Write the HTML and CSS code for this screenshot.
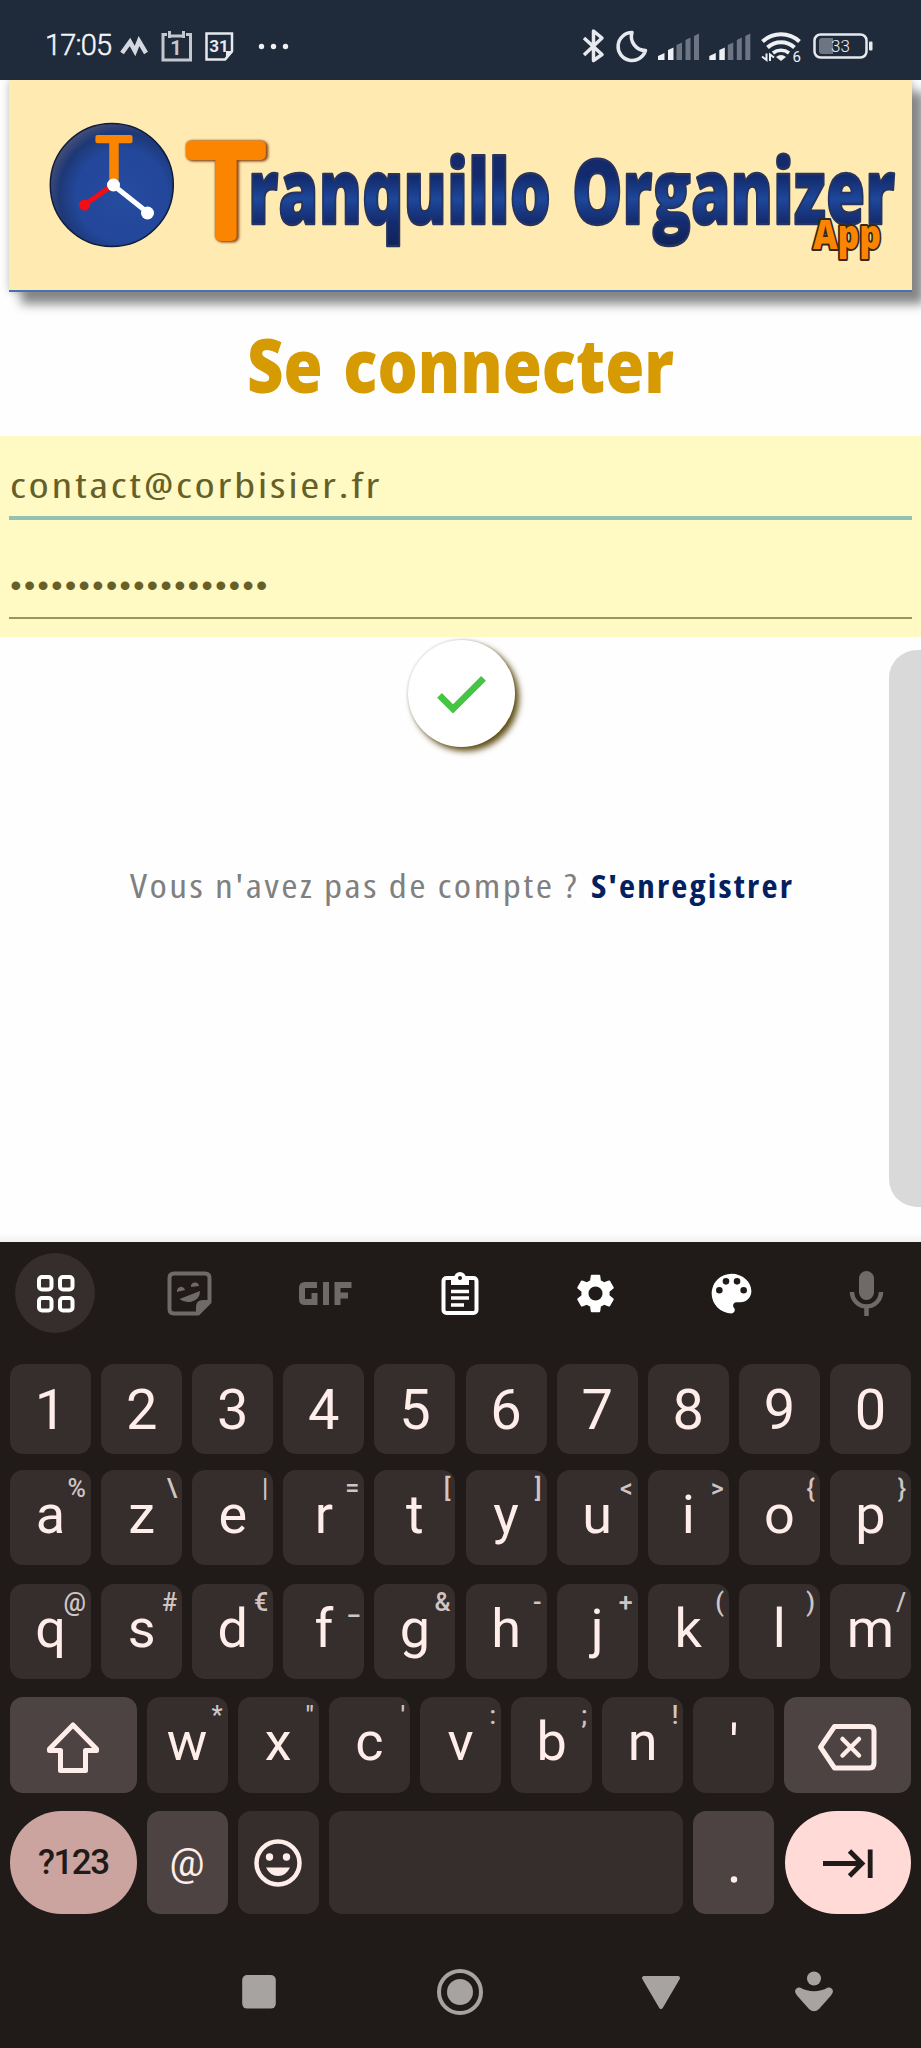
FILE: index.html
```html
<!DOCTYPE html>
<html lang="fr">
<head>
<meta charset="utf-8">
<title>Tranquillo Organizer</title>
<link rel="stylesheet" href="styles.css">
</head>
<body>
<div class="phone">
  <header class="status">
    <svg width="250" height="40" viewBox="40 26 250 40">
      <text class="clock" x="45" y="54.5" textLength="67" lengthAdjust="spacing">17:05</text>
      <path d="M122 53L130 42L135 51L139 41L146 53" fill="none" stroke="#d5d8de" stroke-width="4.5"/>
      <g fill="none" stroke="#c3c7cf" stroke-width="3"><path d="M167 34.5H163V60H190.500V34.500H186M171 36H182"/><path d="M169.500 31V38M183.500 31V38"/></g>
      <text class="cal" x="176" y="54.500" font-size="20" text-anchor="middle" fill="#c3c7cf">1</text>
      <path d="M206.500 33.500H232V51L225 59.500H206.500Z" fill="none" stroke="#e6e9ee" stroke-width="2.500"/>
      <path d="M233 51V52L226 60V51Z" fill="#e6e9ee"/>
      <text class="cal" x="219" y="51.500" font-size="17" text-anchor="middle" fill="#e6e9ee">31</text>
      <g fill="#eef0f4"><circle cx="261.500" cy="46.500" r="2.700"/><circle cx="273.500" cy="46.500" r="2.700"/><circle cx="285.500" cy="46.500" r="2.700"/></g>
    </svg>
    <svg width="300" height="40" viewBox="578 26 300 40">
      <path d="M584 38L602 54.500L593.500 60.500V31L602 38L584 55" fill="none" stroke="#e6e9ee" stroke-width="3.500" stroke-linejoin="round"/>
      <path d="M632 32.500A14 14 0 1 0 645.500 50.500A14 14 0 0 1 632 32.500Z" fill="none" stroke="#e6e9ee" stroke-width="3.500" stroke-linejoin="round"/>
      <g id="signal"><path d="M658 60V56L664.500 53V60ZM668 60V50L673.500 47.500V60Z" fill="#eef0f4"/><path d="M676.500 60V45L682 42.500V60ZM685.500 60V40L690.500 37.500V60ZM694 60V36L699 33.500V60Z" fill="#6d7582"/></g>
      <use href="#signal" x="51.300"/>
      <g fill="none" stroke="#eef0f4" stroke-width="4"><path d="M762.500 41.500A27 27 0 0 1 799.500 41.500"/><path d="M767.500 47.500A20 20 0 0 1 794.500 47.500"/><path d="M773 53A13 13 0 0 1 789 53" stroke-width="3.500"/></g>
      <path d="M776 57Q781 53 786 57L781 61Z" fill="#eef0f4"/>
      <path d="M766.500 53.500V60L762 56.500M770 61V54.500L774 57.500" fill="none" stroke="#eef0f4" stroke-width="2"/>
      <text x="792.500" y="61.500" font-size="15" fill="#eef0f4">6</text>
      <rect x="814.500" y="34.500" width="52" height="23" rx="6" fill="none" stroke="#e6e9ee" stroke-width="2.500"/>
      <path d="M822 38H833V54H822Q819 54 819 51V41Q819 38 822 38Z" fill="#6d7582"/>
      <rect x="869" y="41.500" width="3.500" height="9" rx="1" fill="#e6e9ee"/>
      <text class="pct" x="831" y="52" textLength="19" lengthAdjust="spacing">33</text>
    </svg>
  </header>

  <main class="page">
    <div class="banner">
      <svg width="903" height="210" viewBox="9 80 903 210">
        <defs>
          <radialGradient id="disc" cx=".58" cy=".58" r=".62"><stop offset="0" stop-color="#254b9f"/><stop offset=".6" stop-color="#23479a"/><stop offset=".82" stop-color="#1d3876"/><stop offset="1" stop-color="#4a5077"/></radialGradient>
          <linearGradient id="ink" x1="0" y1="155" x2="0" y2="243" gradientUnits="userSpaceOnUse"><stop offset="0" stop-color="#16296a"/><stop offset=".25" stop-color="#122b6e"/><stop offset=".5" stop-color="#1e479a"/><stop offset=".75" stop-color="#142c70"/><stop offset="1" stop-color="#10245c"/></linearGradient>
        </defs>
        <circle cx="111.800" cy="185" r="61.500" fill="url(#disc)" stroke="#0d1c3d" stroke-width="1.500"/>
        <text class="initial small" x="97" y="179" textLength="34" lengthAdjust="spacingAndGlyphs">T</text>
        <path d="M113 185L84 205" stroke="#f20d17" stroke-width="5"/><circle cx="84.500" cy="205" r="5.500" fill="#f20d17"/>
        <path d="M113 185L147 212" stroke="#fff" stroke-width="5"/><circle cx="113.500" cy="185" r="6.500" fill="#fff"/><circle cx="147.500" cy="213" r="6.500" fill="#fff"/>
        <text class="initial" x="190" y="236" textLength="72" lengthAdjust="spacingAndGlyphs">T</text>
        <g fill="url(#ink)" stroke="#26345e" stroke-width="2.500" stroke-linejoin="round" font-size="91">
          <text class="heavy" x="248" y="223.500" textLength="303" lengthAdjust="spacingAndGlyphs">ranquillo</text>
          <text class="heavy" x="572" y="223.500" textLength="323" lengthAdjust="spacingAndGlyphs">Organizer</text>
        </g>
        <text class="heavy app" x="813" y="249" font-size="40" textLength="68" lengthAdjust="spacingAndGlyphs">App</text>
      </svg>
    </div>

    <h1 class="title"><svg width="440" height="110" viewBox="240 310 440 110"><text class="heavy" x="246" y="393" font-size="75" word-spacing="5" textLength="427" lengthAdjust="spacingAndGlyphs" fill="#d69b03">Se connecter</text></svg></h1>

    <form class="fields">
      <div class="field active"><svg width="500" height="70" viewBox="9 446 500 70"><text class="hand" x="10" y="498" font-size="35" textLength="372" lengthAdjust="spacingAndGlyphs">contact@corbisier.fr</text></svg></div>
      <div class="field"><svg width="500" height="70" viewBox="9 547 500 70"><text class="dots" x="10.300" y="596" textLength="257" lengthAdjust="spacing">•••••••••••••••••••</text></svg></div>
    </form>

    <div class="submit"><svg width="64" height="64" viewBox="0 0 24 24"><path fill="#46c444" stroke="#46c444" stroke-width=".5" d="M9 16.170L4.830 12l-1.420 1.410L9 19 21 7l-1.410-1.410z"/></svg></div>

    <p class="signup"><svg width="680" height="50" viewBox="120 860 680 50">
      <text class="hand" x="129" y="898" font-size="32" textLength="449" fill="#808080" lengthAdjust="spacingAndGlyphs">Vous n'avez pas de compte ?</text>
      <text class="hand bold" x="590" y="898" font-size="32" textLength="203" lengthAdjust="spacingAndGlyphs">S'enregistrer</text>
    </svg></p>
    <div class="side-handle"></div>
  </main>

  <section class="keyboard">
    <div class="tools">
      <div class="tool round"><svg width="80" height="80" viewBox="14 1253 80 80" fill="none" stroke="#fff" stroke-width="4"><rect x="38" y="1277" width="12.500" height="12.500" rx="3"/><rect x="59" y="1277" width="12.500" height="12.500" rx="3"/><rect x="38" y="1298" width="12.500" height="12.500" rx="3"/><rect x="59" y="1298" width="12.500" height="12.500" rx="3"/></svg></div>
      <div class="tool"><svg width="80" height="80" viewBox="151 1253 80 80"><path d="M175 1273.500H206Q210.500 1273.500 210.500 1278V1302L199 1313.500H175Q170.500 1313.500 170.500 1309V1278Q170.500 1273.500 175 1273.500Z" fill="none" stroke="#6f6968" stroke-width="4"/><path d="M212 1300V1303L200 1315H197V1307Q197 1300 204 1300ZM180.500 1299L201 1291Q201 1299 193 1301.500Q186 1303.500 180.500 1299ZM178 1292A4 4 0 0 1 186 1290ZM192 1287A4 4 0 0 1 200 1286Z" fill="#6f6968"/></svg></div>
      <div class="tool"><svg width="80" height="80" viewBox="285 1253 80 80" fill="none" stroke="#6f6968" stroke-width="6"><path d="M317 1285H305Q302 1285 302 1288V1299Q302 1302 305 1302H314.500V1293M326 1282V1305M337.500 1305V1285H351.500M337.500 1295.500H348"/></svg></div>
      <div class="tool"><svg width="80" height="80" viewBox="420 1253 80 80"><rect x="443.500" y="1278" width="33" height="35" rx="3" fill="none" stroke="#fff" stroke-width="4"/><path d="M451 1278H454A6 6 0 0 1 466 1278H469V1285H451Z" fill="#fff"/><circle cx="460" cy="1278" r="2" fill="#201a19"/><path d="M451 1291.500H469M451 1298H469M451 1305H464" stroke="#fff" stroke-width="3.500"/></svg></div>
      <div class="tool"><svg width="47" height="47" viewBox="0 0 24 24"><path fill="#fff" fill-rule="evenodd" d="M19.140 12.940c.040-.300.060-.610.060-.940s-.020-.640-.070-.940l2.030-1.580c.180-.140.230-.410.120-.610l-1.920-3.320c-.120-.220-.370-.290-.590-.220l-2.390.960c-.500-.380-1.030-.700-1.620-.940l-.360-2.540c-.040-.240-.240-.410-.480-.410h-3.840c-.240 0-.430.170-.470.410l-.360 2.540c-.590.240-1.130.570-1.620.940l-2.390-.960c-.220-.080-.470 0-.590.220L2.740 8.870c-.120.210-.080.470.120.610l2.030 1.580c-.050.300-.090.630-.090.940s.020.640.070.940l-2.030 1.580c-.180.140-.230.410-.120.610l1.920 3.320c.120.220.370.290.590.220l2.390-.960c.500.380 1.030.700 1.620.940l.360 2.540c.050.240.240.410.480.410h3.840c.240 0 .440-.170.470-.410l.360-2.540c.590-.240 1.130-.560 1.620-.940l2.390.960c.220.080.470 0 .590-.220l1.920-3.320c.120-.220.070-.470-.120-.610zM12 15.600a3.600 3.600 0 1 1 0-7.200 3.600 3.600 0 0 1 0 7.200z"/></svg></div>
      <div class="tool"><svg width="53" height="53" viewBox="0 0 24 24"><path fill="#fff" d="M12 3a9 9 0 0 0 0 18c.830 0 1.500-.670 1.500-1.500 0-.390-.150-.740-.390-1.010-.230-.260-.380-.610-.380-.990 0-.830.670-1.500 1.500-1.500H16c2.760 0 5-2.240 5-5 0-4.420-4.030-8-9-8zm-5.500 9a1.500 1.500 0 1 1 0-3 1.500 1.500 0 0 1 0 3zm3-4a1.500 1.500 0 1 1 0-3 1.500 1.500 0 0 1 0 3zm5 0a1.500 1.500 0 1 1 0-3 1.500 1.500 0 0 1 0 3zm3 4a1.500 1.500 0 1 1 0-3 1.500 1.500 0 0 1 0 3z"/></svg></div>
      <div class="tool"><svg width="80" height="80" viewBox="826 1253 80 80"><rect x="859" y="1271" width="15" height="29" rx="7.500" fill="#6f6968"/><path d="M852 1292A14.500 14.500 0 0 0 881 1292M866.500 1306V1316" fill="none" stroke="#6f6968" stroke-width="4.500"/></svg></div>
    </div>

    <div class="row ten digits">
      <div class="key">1</div><div class="key">2</div><div class="key">3</div><div class="key">4</div><div class="key">5</div><div class="key">6</div><div class="key">7</div><div class="key">8</div><div class="key">9</div><div class="key">0</div>
    </div>
    <div class="row ten">
      <div class="key">a<span class="alt">%</span></div><div class="key">z<span class="alt">\</span></div><div class="key">e<span class="alt">|</span></div><div class="key">r<span class="alt">=</span></div><div class="key">t<span class="alt">[</span></div><div class="key">y<span class="alt">]</span></div><div class="key">u<span class="alt">&lt;</span></div><div class="key">i<span class="alt">&gt;</span></div><div class="key">o<span class="alt">{</span></div><div class="key">p<span class="alt">}</span></div>
    </div>
    <div class="row ten third">
      <div class="key">q<span class="alt">@</span></div><div class="key">s<span class="alt">#</span></div><div class="key">d<span class="alt">€</span></div><div class="key">f<span class="alt low">_</span></div><div class="key">g<span class="alt">&amp;</span></div><div class="key">h<span class="alt">-</span></div><div class="key">j<span class="alt">+</span></div><div class="key">k<span class="alt">(</span></div><div class="key">l<span class="alt">)</span></div><div class="key">m<span class="alt">/</span></div>
    </div>
    <div class="row mixed">
      <div class="key special icon"><svg width="60" height="60" viewBox="43 1712 60 60"><path d="M73 1722L96.500 1746V1747.500H85.500V1767.500H60.500V1747.500H49.500V1746Z" fill="none" stroke="#ffedea" stroke-width="5" stroke-linejoin="round"/></svg></div>
      <div class="key">w<span class="alt">*</span></div><div class="key">x<span class="alt">"</span></div><div class="key">c<span class="alt">'</span></div><div class="key">v<span class="alt">:</span></div><div class="key">b<span class="alt">;</span></div><div class="key">n<span class="alt">!</span></div><div class="key quote">'</div>
      <div class="key special icon"><svg width="70" height="60" viewBox="812.500 1715 70 60"><path d="M834 1726.500H869Q873.500 1726.500 873.500 1731V1763Q873.500 1768 869 1768H834L820 1747.200Z" fill="none" stroke="#ffedea" stroke-width="5" stroke-linejoin="round"/><path d="M842 1739L858.500 1755.500M858.500 1739L842 1755.500" stroke="#ffedea" stroke-width="4.500" stroke-linecap="round"/></svg></div>
    </div>
    <div class="row mixed last">
      <div class="key symbols">?123</div>
      <div class="key special at">@</div>
      <div class="key icon"><svg width="50" height="50" viewBox="-25 -25 50 50"><circle r="21.500" fill="none" stroke="#ffedea" stroke-width="4.500"/><circle cx="-8.500" cy="-6" r="3.700" fill="#ffedea"/><circle cx="8.500" cy="-6" r="3.700" fill="#ffedea"/><path d="M-12 4.500H12Q8 13 0 13T-12 4.500Z" fill="#ffedea"/></svg></div>
      <div class="key space"></div>
      <div class="key special icon"><svg width="20" height="60" viewBox="-10 -30 20 60"><circle cy="16.500" r="3.200" fill="#ffedea"/></svg></div>
      <div class="key enter icon"><svg width="60" height="40" viewBox="817 1842 60 40" fill="none" stroke="#201a19" stroke-width="4.800"><path d="M822 1862.500H861M848.500 1850L861 1862.500L848.500 1875M869.200 1848.500V1877"/></svg></div>
    </div>

    <nav class="nav">
      <svg width="48" height="48" viewBox="-24 -24 48 48"><rect x="-16.800" y="-17" width="33.600" height="33.600" rx="5" fill="#a6a3a1"/></svg>
      <svg width="48" height="48" viewBox="-24 -24 48 48"><circle r="21" fill="none" stroke="#a6a3a1" stroke-width="4"/><circle r="13" fill="#a6a3a1"/></svg>
      <svg width="48" height="48" viewBox="-24 -24 48 48"><path d="M-17 -14H17L0 15Z" fill="#a6a3a1" stroke="#a6a3a1" stroke-width="4" stroke-linejoin="round"/></svg>
      <svg width="48" height="48" viewBox="-24 -24 48 48"><circle cy="-13.500" r="7" fill="#a6a3a1"/><path d="M-14 -4.500Q-18 -5 -19 -1Q-19 1 -17 3.500L-5 17Q0 21.500 5 17L17 3.500Q19 1 19 -1Q18 -5 14 -4.500Q0 3 -14 -4.500Z" fill="#a6a3a1"/></svg>
    </nav>
  </section>
</div>
</body>
</html>
```
FILE: styles.css
```css
* { box-sizing: border-box; }
body { margin: 0; background: #fff; font-family: Roboto, "Open Sans", sans-serif; }
svg { display: block; flex: none; overflow: visible; }

.phone { width: 921px; height: 2048px; display: flex; flex-direction: column; overflow: hidden; }

.status { height: 80px; flex: none; background: #1f2a3b; display: flex; justify-content: space-between; align-items: flex-start; padding: 26px 43px 0 40px; position: relative; z-index: 1; }
.clock { font: 300 29px Roboto, sans-serif; fill: #f4f5f8; stroke: #f4f5f8; stroke-width: .5; }
.cal { font-family: Roboto, sans-serif; font-weight: 700; }
.pct { font: 300 17px Roboto, sans-serif; fill: #eef0f4; }

.page { height: 1162px; flex: none; display: flex; flex-direction: column; align-items: center; position: relative; background: linear-gradient(#fefefe 0 1153px, #f2f2f2 1162px); }
.banner { width: 903px; height: 212px; flex: none; background: #ffeab1; border-bottom: 2px solid #4671b3; box-shadow: 12px 12px 10px #868686, 0 0 8px rgba(0, 0, 0, .25); }
.heavy { font-family: "Open Sans", sans-serif; font-weight: 800; }
.initial { font: 500 126px "Open Sans", sans-serif; fill: #fb8500; stroke: #fb8500; stroke-width: 10; stroke-linejoin: round; filter: drop-shadow(0 0 1px #8f4d1b) drop-shadow(2px 1px 1px #8f4d1b); }
.initial.small { font-size: 58px; stroke-width: 4; filter: none; }
.app { fill: #fb8500; stroke: #33291c; stroke-width: 4; paint-order: stroke; stroke-linejoin: round; }

.title { margin: 18px 0 0; height: 126px; flex: none; }

.fields { width: 921px; height: 201px; flex: none; padding: 10px 9px 0; background: #fff9c4; display: flex; flex-direction: column; gap: 27px; }
.field { height: 72px; border-bottom: 2px solid #9a9560; }
.field.active { height: 74px; border-bottom: 4px solid #95c1b2; }
.hand { font-family: "Open Sans", sans-serif; font-stretch: 80%; letter-spacing: 2px; }
.fields .hand, .dots { fill: #665f28; }
.dots { font-family: "Liberation Sans", sans-serif; font-size: 32px; }
.bold { font-weight: 700; fill: #03215e; }

.submit { width: 107px; height: 107px; flex: none; margin: 3px 0 0 1px; border-radius: 50%; background: #fff; box-shadow: 4px 4px 6px #5d4c12, 0 0 3px rgba(0, 0, 0, .2); display: flex; align-items: center; justify-content: center; }
.signup { margin: 113px 0 0; }
.side-handle { position: absolute; right: 0; top: 570px; width: 32px; height: 557px; background: #d9d9d9; border-radius: 28px 0 0 28px; }

.keyboard { flex: 1; background: #201a19; padding: 11px 10px 0; }
.tools { height: 80px; margin: 0 4.500px 31px; display: flex; justify-content: space-between; }
.tool { width: 80px; height: 80px; display: flex; align-items: center; justify-content: center; }
.round { border-radius: 50%; background: #362d2d; }

.row { display: grid; gap: 10.100px; height: 95px; margin-bottom: 19px; }
.ten { grid-template-columns: repeat(10, 1fr); }
.third { margin-bottom: 18px; }
.mixed { grid-template-columns: 126.500px repeat(7, 1fr) 126.500px; height: 96px; margin-bottom: 18px; }
.digits { height: 90px; margin-bottom: 16px; grid-template-rows: 90px; }
.last { height: 103px; margin-bottom: 54px; grid-template-rows: 103px; }
.key { position: relative; min-width: 0; background: #362d2d; border-radius: 13px; color: #ffedea; font-size: 54px; line-height: 90px; text-align: center; }
.digits .key { font-size: 56px; line-height: 92px; }
.alt { position: absolute; top: 4px; right: 5px; font-size: 25px; font-weight: 500; line-height: 30px; color: #cfc5c3; }
.low { top: 8px; }
.quote { line-height: 96px; }
.icon { display: flex; align-items: center; justify-content: center; }
.special { background: #4c4342; }
.space { grid-column: span 4; }
.at { font-size: 39px; line-height: 104px; }
.symbols { border-radius: 52px; background: #cba49f; color: #201a19; font-size: 35px; font-weight: 500; letter-spacing: -1.500px; line-height: 103px; }
.enter { border-radius: 52px; background: #ffdad7; }

.nav { display: flex; padding-left: 224.500px; }
.nav svg:nth-child(2) { margin-left: 153.500px; }
.nav svg:nth-child(3) { margin-left: 152.500px; }
.nav svg:nth-child(4) { margin-left: 105.500px; }
```
